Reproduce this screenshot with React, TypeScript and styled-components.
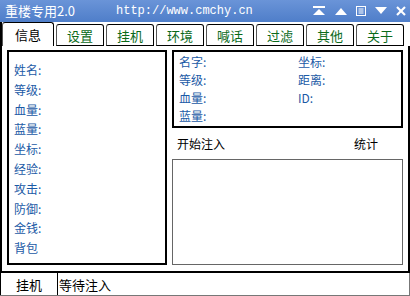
import React from "react";
import styled, { createGlobalStyle } from "styled-components";

const GlobalStyle = createGlobalStyle`
  html, body {
    margin: 0;
    padding: 0;
    background: #ffffff;
  }
  body {
    font-family: "Noto Sans CJK SC", "DejaVu Sans", sans-serif;
    font-size: 12px;
  }
`;

const Window = styled.div`
  width: 410px;
  height: 296px;
  background: #ffffff;
  display: flex;
  flex-direction: column;
  overflow: hidden;
`;

const TitleBar = styled.div`
  height: 22px;
  background: linear-gradient(#6a94d8, #4f7ec9);
  display: flex;
  align-items: center;
  color: #ffffff;
  padding: 0 4px 0 5px;
`;

const AppName = styled.span`
  font-size: 13px;
  width: 111px;
  line-height: 22px;
`;

const Url = styled.span`
  font-family: "Liberation Mono", "DejaVu Sans Mono", monospace;
  font-size: 12px;
  margin-right: auto;
`;

const TitleButtons = styled.div`
  display: flex;
  align-items: center;
  gap: 8px;
`;

const TitleButton = styled.svg`
  display: block;
  fill: #ffffff;
  stroke: #ffffff;
`;

const TabRow = styled.div`
  height: 24px;
  display: flex;
  align-items: flex-end;
  gap: 2px;
  padding-left: 2px;
  border-left: 2px solid #000;
  box-sizing: border-box;
`;

const Tab = styled.div<{ $active?: boolean }>`
  width: ${(p) => (p.$active ? 52 : 48)}px;
  height: ${(p) => (p.$active ? 24 : 22)}px;
  box-sizing: border-box;
  border: 1px solid #000;
  border-left-color: #555;
  border-bottom: ${(p) => (p.$active ? "none" : "1px solid #000")};
  border-radius: 3px 3px 0 0;
  display: flex;
  align-items: center;
  justify-content: center;
  font-size: 13px;
  color: ${(p) => (p.$active ? "#000" : "#0a6a1a")};
  background: #fff;
  margin-left: ${(p) => (p.$active ? -2 : 0)}px;
`;

const Body = styled.div`
  flex: 1;
  display: flex;
  gap: 5px;
  padding: 4px 5px 6px 5px;
  border-left: 2px solid #000;
  border-right: 2px solid #000;
  box-sizing: border-box;
`;

const LeftPanel = styled.div`
  width: 160px;
  border: 2px solid #000;
  box-sizing: border-box;
  padding: 8px 0 0 5px;
  display: flex;
  flex-direction: column;
`;

const Label = styled.div`
  color: #1b5aa6;
  font-size: 12px;
  height: 19.8px;
  line-height: 19.8px;
  white-space: nowrap;
`;

const RightColumn = styled.div`
  flex: 1;
  display: flex;
  flex-direction: column;
`;

const InfoBox = styled.div`
  height: 78px;
  border: 2px solid #000;
  box-sizing: border-box;
  padding: 1px 0 0 5px;
  display: grid;
  grid-template-columns: 119px 1fr;
  grid-auto-rows: 18px;
  align-items: center;
`;

const InfoLabel = styled.div`
  color: #1b5aa6;
  font-size: 12px;
  line-height: 18px;
`;

const StatsHeader = styled.div`
  display: flex;
  justify-content: space-between;
  padding: 7px 25px 0 5px;
  height: 31px;
  box-sizing: border-box;
  font-size: 12px;
  color: #000;
`;

const LogBox = styled.div`
  flex: 1;
  border: 1px solid #666;
`;

const StatusBar = styled.div`
  height: 25px;
  border-top: 2px solid #000;
  border-bottom: 1px solid #777;
  display: flex;
  box-sizing: border-box;
`;

const StatusCell = styled.div`
  width: 58px;
  border-left: 1px solid #000;
  border-right: 1px solid #000;
  box-sizing: border-box;
  display: flex;
  align-items: center;
  justify-content: center;
  font-size: 13px;
`;

const StatusText = styled.div`
  display: flex;
  align-items: center;
  padding-left: 1px;
  font-size: 13px;
  border-right: 1px solid #777;
  flex: 1;
`;

const tabs = ["信息", "设置", "挂机", "环境", "喊话", "过滤", "其他", "关于"];
const leftLabels = ["姓名:", "等级:", "血量:", "蓝量:", "坐标:", "经验:", "攻击:", "防御:", "金钱:", "背包"];

const App: React.FC = () => {
  return (
    <Window>
      <GlobalStyle />
      <TitleBar>
        <AppName>重楼专用2.0</AppName>
        <Url>http://www.cmchy.cn</Url>
        <TitleButtons>
          <TitleButton width="14" height="10" viewBox="0 0 14 10">
            <rect x="1" y="0" width="12" height="2" stroke="none" />
            <polygon points="1,9 13,9 7,3" stroke="none" />
          </TitleButton>
          <TitleButton width="14" height="10" viewBox="0 0 14 10">
            <polygon points="1,9 13,9 7,2" stroke="none" />
          </TitleButton>
          <TitleButton width="10" height="10" viewBox="0 0 10 10">
            <rect x="0.5" y="0.5" width="9" height="9" fill="none" strokeWidth="1" />
            <line x1="2.5" y1="3" x2="7.5" y2="3" strokeWidth="1" />
            <line x1="2.5" y1="5" x2="7.5" y2="5" strokeWidth="1" />
            <line x1="2.5" y1="7" x2="7.5" y2="7" strokeWidth="1" />
          </TitleButton>
          <TitleButton width="14" height="10" viewBox="0 0 14 10">
            <polygon points="1,1 13,1 7,8" stroke="none" />
          </TitleButton>
          <TitleButton width="10" height="10" viewBox="0 0 10 10">
            <line x1="1" y1="1" x2="9" y2="9" strokeWidth="2.2" />
            <line x1="9" y1="1" x2="1" y2="9" strokeWidth="2.2" />
          </TitleButton>
        </TitleButtons>
      </TitleBar>
      <TabRow>
        {tabs.map((t, i) => (
          <Tab key={t} $active={i === 0}>
            {t}
          </Tab>
        ))}
      </TabRow>
      <Body>
        <LeftPanel>
          {leftLabels.map((l) => (
            <Label key={l}>{l}</Label>
          ))}
        </LeftPanel>
        <RightColumn>
          <InfoBox>
            <InfoLabel>名字:</InfoLabel>
            <InfoLabel>坐标:</InfoLabel>
            <InfoLabel>等级:</InfoLabel>
            <InfoLabel>距离:</InfoLabel>
            <InfoLabel>血量:</InfoLabel>
            <InfoLabel>ID:</InfoLabel>
            <InfoLabel>蓝量:</InfoLabel>
          </InfoBox>
          <StatsHeader>
            <span>开始注入</span>
            <span>统计</span>
          </StatsHeader>
          <LogBox />
        </RightColumn>
      </Body>
      <StatusBar>
        <StatusCell>挂机</StatusCell>
        <StatusText>等待注入</StatusText>
      </StatusBar>
    </Window>
  );
};

export default App;
